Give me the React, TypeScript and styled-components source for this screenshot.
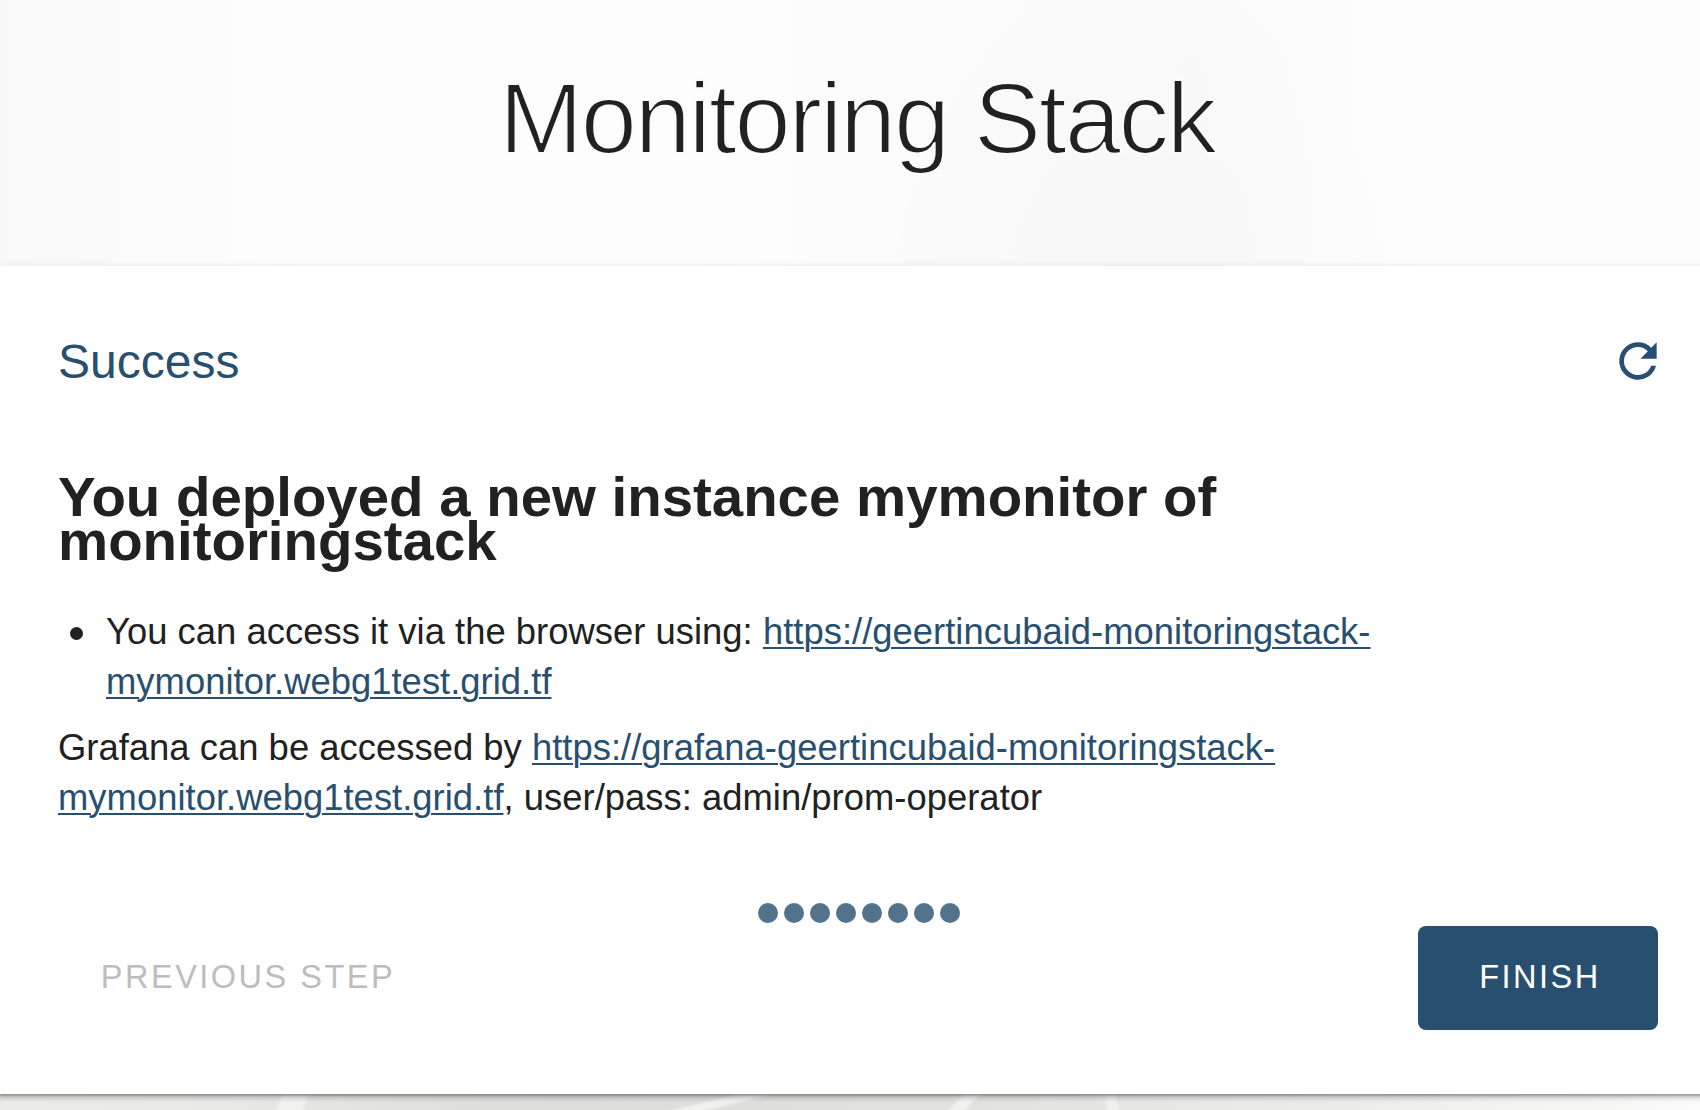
import React from "react";
import styled, { createGlobalStyle } from "styled-components";

const ink = "#212121";
const blue = "#284f6f";

const GlobalStyle = createGlobalStyle`
  html, body { margin: 0; padding: 0; overflow: hidden; }
  * { box-sizing: border-box; }
`;

const Page = styled.div`
  width: 1700px;
  height: 1110px;
  overflow: hidden;
  position: relative;
  display: grid;
  grid-template-rows: 266px 828px 16px;
  grid-template-columns: 1720px;
  font-family: "Liberation Sans", Arial, sans-serif;
  color: ${ink};
  background:
    radial-gradient(ellipse 300px 420px at 1140px 330px, rgba(0,0,0,0.012), rgba(0,0,0,0) 100%),
    linear-gradient(90deg, #f9f9f9 0, #fbfbfb 150px, #fdfdfd 300px, #fdfdfd 700px, #fbfbfb 900px, #fafafa 1200px, #fdfdfd 1420px, #fdfdfd 1700px);
`;

const Header = styled.header`
  padding: 60px 6px 0 0;
  text-align: center;
`;

/* The outline in the page colour slims the regular weight down to a light one. */
const Title = styled.h1`
  margin: 0;
  font-weight: 400;
  font-size: 101px;
  line-height: 116px;
  letter-spacing: -2.25px;
  white-space: nowrap;
  -webkit-text-stroke: 2.2px #fbfbfb;
`;

const Card = styled.main`
  position: relative;
  z-index: 1;
  margin-left: -4px;
  padding: 68px 60px 0 62px;
  background: #fff;
  border-radius: 8px 8px 0 0;
  box-shadow: 0 6px 2px -4px rgba(0,0,0,0.2), 0 4px 4px 0 rgba(0,0,0,0.14), 0 2px 10px 0 rgba(0,0,0,0.12);
`;

const CardHead = styled.div`
  display: flex;
  justify-content: space-between;
  height: 56px;
`;

const Status = styled.h2`
  margin: 0;
  font-weight: 400;
  font-size: 48px;
  line-height: 56px;
  color: ${blue};
`;

const RefreshButton = styled.button`
  display: flex;
  align-items: center;
  width: 56px;
  height: 54px;
  margin-right: -6px;
  padding: 0;
  border: 0;
  background: none;
  color: ${blue};
`;

const Message = styled.section`
  padding-top: 85px;
  height: 513px;
  width: 1400px;
`;

const Heading = styled.h1`
  margin: 0;
  font-size: 56.4px;
  font-weight: 700;
  line-height: 44px;
`;

const List = styled.ul`
  margin: 44px 0 0;
  padding: 0 0 0 48px;
  list-style: none;
`;

const bodyText = `
  font-size: 36.4px;
  line-height: 50px;
  letter-spacing: 0.02px;
`;

const Item = styled.li`
  ${bodyText}

  &::before {
    content: "";
    display: inline-block;
    width: 13px;
    height: 13px;
    margin: 0 23px 0 -36px;
    border-radius: 50%;
    background: ${ink};
    vertical-align: 4px;
  }
`;

const Paragraph = styled.p`
  margin: 16px 0 0;
  ${bodyText}
`;

const Link = styled.a`
  color: ${blue};
  text-decoration: underline;
  text-decoration-thickness: 2px;
  text-underline-offset: 3px;
`;

const Dots = styled.div`
  display: flex;
  justify-content: center;
  gap: 6px;
  height: 20px;
`;

const Dot = styled.span`
  width: 20px;
  height: 20px;
  border-radius: 50%;
  background: #53738c;
`;

const Actions = styled.div`
  display: flex;
  justify-content: space-between;
  margin: 3px 2px 0 0;
`;

const Button = styled.button<{ $filled?: boolean }>`
  height: 104px;
  width: ${(p) => (p.$filled ? "240px" : "380px")};
  padding: 0 0 2px ${(p) => (p.$filled ? "4px" : "0")};
  border: 0;
  border-radius: 8px;
  background: ${(p) => (p.$filled ? blue : "transparent")};
  color: ${(p) => (p.$filled ? "#fff" : "#bdbdbd")};
  font: 400 32.5px/102px "Liberation Sans", Arial, sans-serif;
  letter-spacing: 2.5px;
`;

const Backdrop = styled.div`
  height: 16px;
  width: 1700px;
`;

export default function App() {
  return (
    <>
      <GlobalStyle />
      <Page>
        <Header>
          <Title>Monitoring Stack</Title>
        </Header>
        <Card>
          <CardHead>
            <Status>Success</Status>
            <RefreshButton aria-label="Restart">
              <svg width="56" height="56" viewBox="0 0 24 24" fill="currentColor">
                <path d="M17.65 6.35A7.95 7.95 0 0 0 12 4a8 8 0 1 0 7.73 10h-2.08A6 6 0 1 1 12 6c1.66 0 3.14.69 4.22 1.78L13 11h7V4z" />
              </svg>
            </RefreshButton>
          </CardHead>
          <Message>
            <Heading>
              You deployed a new instance mymonitor of
              <br />
              monitoringstack
            </Heading>
            <List>
              <Item>
                You can access it via the browser using:{" "}
                <Link>
                  https://geertincubaid-monitoringstack-
                  <br />
                  mymonitor.webg1test.grid.tf
                </Link>
              </Item>
            </List>
            <Paragraph>
              Grafana can be accessed by{" "}
              <Link>
                https://grafana-geertincubaid-monitoringstack-
                <br />
                mymonitor.webg1test.grid.tf
              </Link>
              , user/pass: admin/prom-operator
            </Paragraph>
          </Message>
          <Dots>
            {Array.from({ length: 8 }, (_, i) => (
              <Dot key={i} />
            ))}
          </Dots>
          <Actions>
            <Button>PREVIOUS STEP</Button>
            <Button $filled>FINISH</Button>
          </Actions>
        </Card>
        <Backdrop>
          <svg width="1700" height="16" viewBox="0 0 1700 16">
            <defs>
              <linearGradient id="floor" x1="0" x2="1">
                <stop offset="0" stopColor="#ecece8" />
                <stop offset="0.13" stopColor="#e8e9e5" />
                <stop offset="0.33" stopColor="#dcddd9" />
                <stop offset="0.6" stopColor="#e3e4e0" />
                <stop offset="0.78" stopColor="#ebece9" />
                <stop offset="1" stopColor="#fbfbfb" />
              </linearGradient>
              <filter id="soft" x="-5%" width="110%" y="-50%" height="200%">
                <feGaussianBlur stdDeviation="1.2" />
              </filter>
            </defs>
            <rect width="1700" height="16" fill="url(#floor)" />
            <path
              d="M283 0h24l-4 18h-28zM740 0h32l-72 18h-36zM965 0h16l-18 18h-17zM1104 0h11l5 18h-12z"
              fill="#f1f2ef"
              filter="url(#soft)"
            />
          </svg>
        </Backdrop>
      </Page>
    </>
  );
}
